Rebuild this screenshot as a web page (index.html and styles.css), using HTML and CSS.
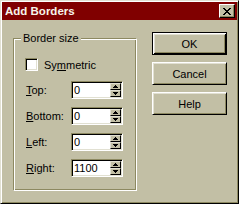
FILE: index.html
```html
<!DOCTYPE html>
<html lang="en">
    <head>
        <meta charset="UTF-8"/>
        <title>Add Borders</title>
        <link rel="stylesheet" href="styles.css">
    </head>
    <body>
        <div class="window">
            <div class="titlebar">
                <span class="title">Add Borders</span>
                <span class="close-btn">
                    <svg width="8" height="7" viewBox="0 0 8 7">
                        <path d="M0 0h2v1h-2zM6 0h2v1h-2zM1 1h2v1h-2zM5 1h2v1h-2zM2 2h4v1h-4zM3 3h2v1h-2zM2 4h4v1h-4zM1 5h2v1h-2zM5 5h2v1h-2zM0 6h2v1h-2zM6 6h2v1h-2z" fill="#000"/>
                    </svg>
                </span>
            </div>
            <div class="content">
                <fieldset class="group">
                    <legend>Border size</legend>
                    <div class="check-row">
                        <span class="checkbox"></span>
                        <span>Sy<u>m</u>metric</span>
                    </div>
                    <div class="field-row">
                        <span class="field-label"><u>T</u>op:</span>
                        <div class="spin">
                            <span class="spin-value">0</span>
                            <span class="spin-arrows">
                                <span class="arrow"><svg width="5" height="3" viewBox="0 0 5 3"><path d="M2 0h1v1h1v1h1v1h-5v-1h1v-1h1z" fill="#000"/></svg></span>
                                <span class="arrow"><svg width="5" height="3" viewBox="0 0 5 3"><path d="M0 0h5v1h-1v1h-1v1h-1v-1h-1v-1h-1z" fill="#000"/></svg></span>
                            </span>
                        </div>
                    </div>
                    <div class="field-row">
                        <span class="field-label"><u>B</u>ottom:</span>
                        <div class="spin">
                            <span class="spin-value">0</span>
                            <span class="spin-arrows">
                                <span class="arrow"><svg width="5" height="3" viewBox="0 0 5 3"><path d="M2 0h1v1h1v1h1v1h-5v-1h1v-1h1z" fill="#000"/></svg></span>
                                <span class="arrow"><svg width="5" height="3" viewBox="0 0 5 3"><path d="M0 0h5v1h-1v1h-1v1h-1v-1h-1v-1h-1z" fill="#000"/></svg></span>
                            </span>
                        </div>
                    </div>
                    <div class="field-row">
                        <span class="field-label"><u>L</u>eft:</span>
                        <div class="spin">
                            <span class="spin-value">0</span>
                            <span class="spin-arrows">
                                <span class="arrow"><svg width="5" height="3" viewBox="0 0 5 3"><path d="M2 0h1v1h1v1h1v1h-5v-1h1v-1h1z" fill="#000"/></svg></span>
                                <span class="arrow"><svg width="5" height="3" viewBox="0 0 5 3"><path d="M0 0h5v1h-1v1h-1v1h-1v-1h-1v-1h-1z" fill="#000"/></svg></span>
                            </span>
                        </div>
                    </div>
                    <div class="field-row">
                        <span class="field-label"><u>R</u>ight:</span>
                        <div class="spin">
                            <span class="spin-value">1100</span>
                            <span class="spin-arrows">
                                <span class="arrow"><svg width="5" height="3" viewBox="0 0 5 3"><path d="M2 0h1v1h1v1h1v1h-5v-1h1v-1h1z" fill="#000"/></svg></span>
                                <span class="arrow"><svg width="5" height="3" viewBox="0 0 5 3"><path d="M0 0h5v1h-1v1h-1v1h-1v-1h-1v-1h-1z" fill="#000"/></svg></span>
                            </span>
                        </div>
                    </div>
                </fieldset>
                <div class="buttons">
                    <button class="btn btn-default">OK</button>
                    <button class="btn">Cancel</button>
                    <button class="btn">Help</button>
                </div>
            </div>
        </div>
    </body>
</html>
```

FILE: styles.css
```css
body {
    margin: 0;
    font-family: "Liberation Sans", Arial, sans-serif;
    font-size: 11px;
    color: #000;
    background: #c2bfa5;
}

.window {
    width: 239px;
    height: 204px;
    box-sizing: border-box;
    padding: 1px;
    background: #c2bfa5;
    border: 1px solid;
    border-color: #e1e0d2 #000 #000 #e1e0d2;
    box-shadow: inset 1px 1px 0 #fff, inset -1px -1px 0 #8d8961;
}

.titlebar {
    height: 18px;
    display: flex;
    align-items: center;
    justify-content: space-between;
    padding: 0 2px 0 3px;
    background: #800000;
}

.title {
    color: #f6f4ea;
    font-weight: 700;
    font-size: 11.5px;
}

.close-btn {
    width: 16px;
    height: 14px;
    box-sizing: border-box;
    display: flex;
    align-items: center;
    justify-content: center;
    background: #c2bfa5;
    border: 1px solid;
    border-color: #fff #000 #000 #fff;
    box-shadow: inset -1px -1px 0 #8d8961;
}

.content {
    display: flex;
    padding-left: 11px;
}

.group {
    width: 124px;
    box-sizing: border-box;
    margin: 12px 0 0;
    padding: 13px 0 13px 11px;
    border: 1px solid;
    border-color: #8d8961 #fff #fff #8d8961;
    box-shadow: inset 1px 1px 0 #fff, inset -1px -1px 0 #8d8961;
    min-width: 0;
}

.group legend {
    margin-left: -4px;
    padding: 0 2px;
    line-height: 13px;
    background: #c2bfa5;
}

.check-row {
    display: flex;
    align-items: center;
    gap: 6px;
    height: 13px;
    margin-bottom: 10px;
}

.checkbox {
    width: 13px;
    height: 13px;
    box-sizing: border-box;
    background: #fff;
    border: 1px solid;
    border-color: #8d8961 #fff #fff #8d8961;
    box-shadow: inset 1px 1px 0 #000, inset -1px -1px 0 #e1e0d2;
}

.field-row {
    display: flex;
    align-items: center;
    margin-bottom: 8px;
}

.field-row:last-child {
    margin-bottom: 0;
}

.field-label {
    width: 46px;
    padding-left: 1px;
    box-sizing: border-box;
}

.spin {
    width: 52px;
    height: 18px;
    box-sizing: border-box;
    display: flex;
    padding: 1px;
    background: #fff;
    border: 1px solid;
    border-color: #8d8961 #fff #fff #8d8961;
    box-shadow: inset 1px 1px 0 #000, inset -1px -1px 0 #e1e0d2;
}

.spin-value {
    flex: 1;
    padding-left: 1px;
    line-height: 14px;
}

.spin-arrows {
    width: 11px;
    display: flex;
    flex-direction: column;
}

.arrow {
    flex: 1;
    display: flex;
    align-items: center;
    justify-content: center;
    box-sizing: border-box;
    background: #c2bfa5;
    border: 1px solid;
    border-color: #e1e0d2 #000 #000 #e1e0d2;
}

.buttons {
    display: flex;
    flex-direction: column;
    gap: 7px;
    margin: 12px 0 0 15px;
}

.btn {
    width: 75px;
    height: 23px;
    box-sizing: border-box;
    padding: 0;
    font-family: inherit;
    font-size: 11px;
    color: #000;
    background: #c2bfa5;
    border: 1px solid;
    border-color: #fff #000 #000 #fff;
    box-shadow: inset 1px 1px 0 #e1e0d2, inset -1px -1px 0 #8d8961;
}

.btn-default {
    border-color: #000;
    box-shadow: inset 1px 1px 0 #fff, inset -1px -1px 0 #000, inset 2px 2px 0 #e1e0d2, inset -2px -2px 0 #8d8961;
}
```
